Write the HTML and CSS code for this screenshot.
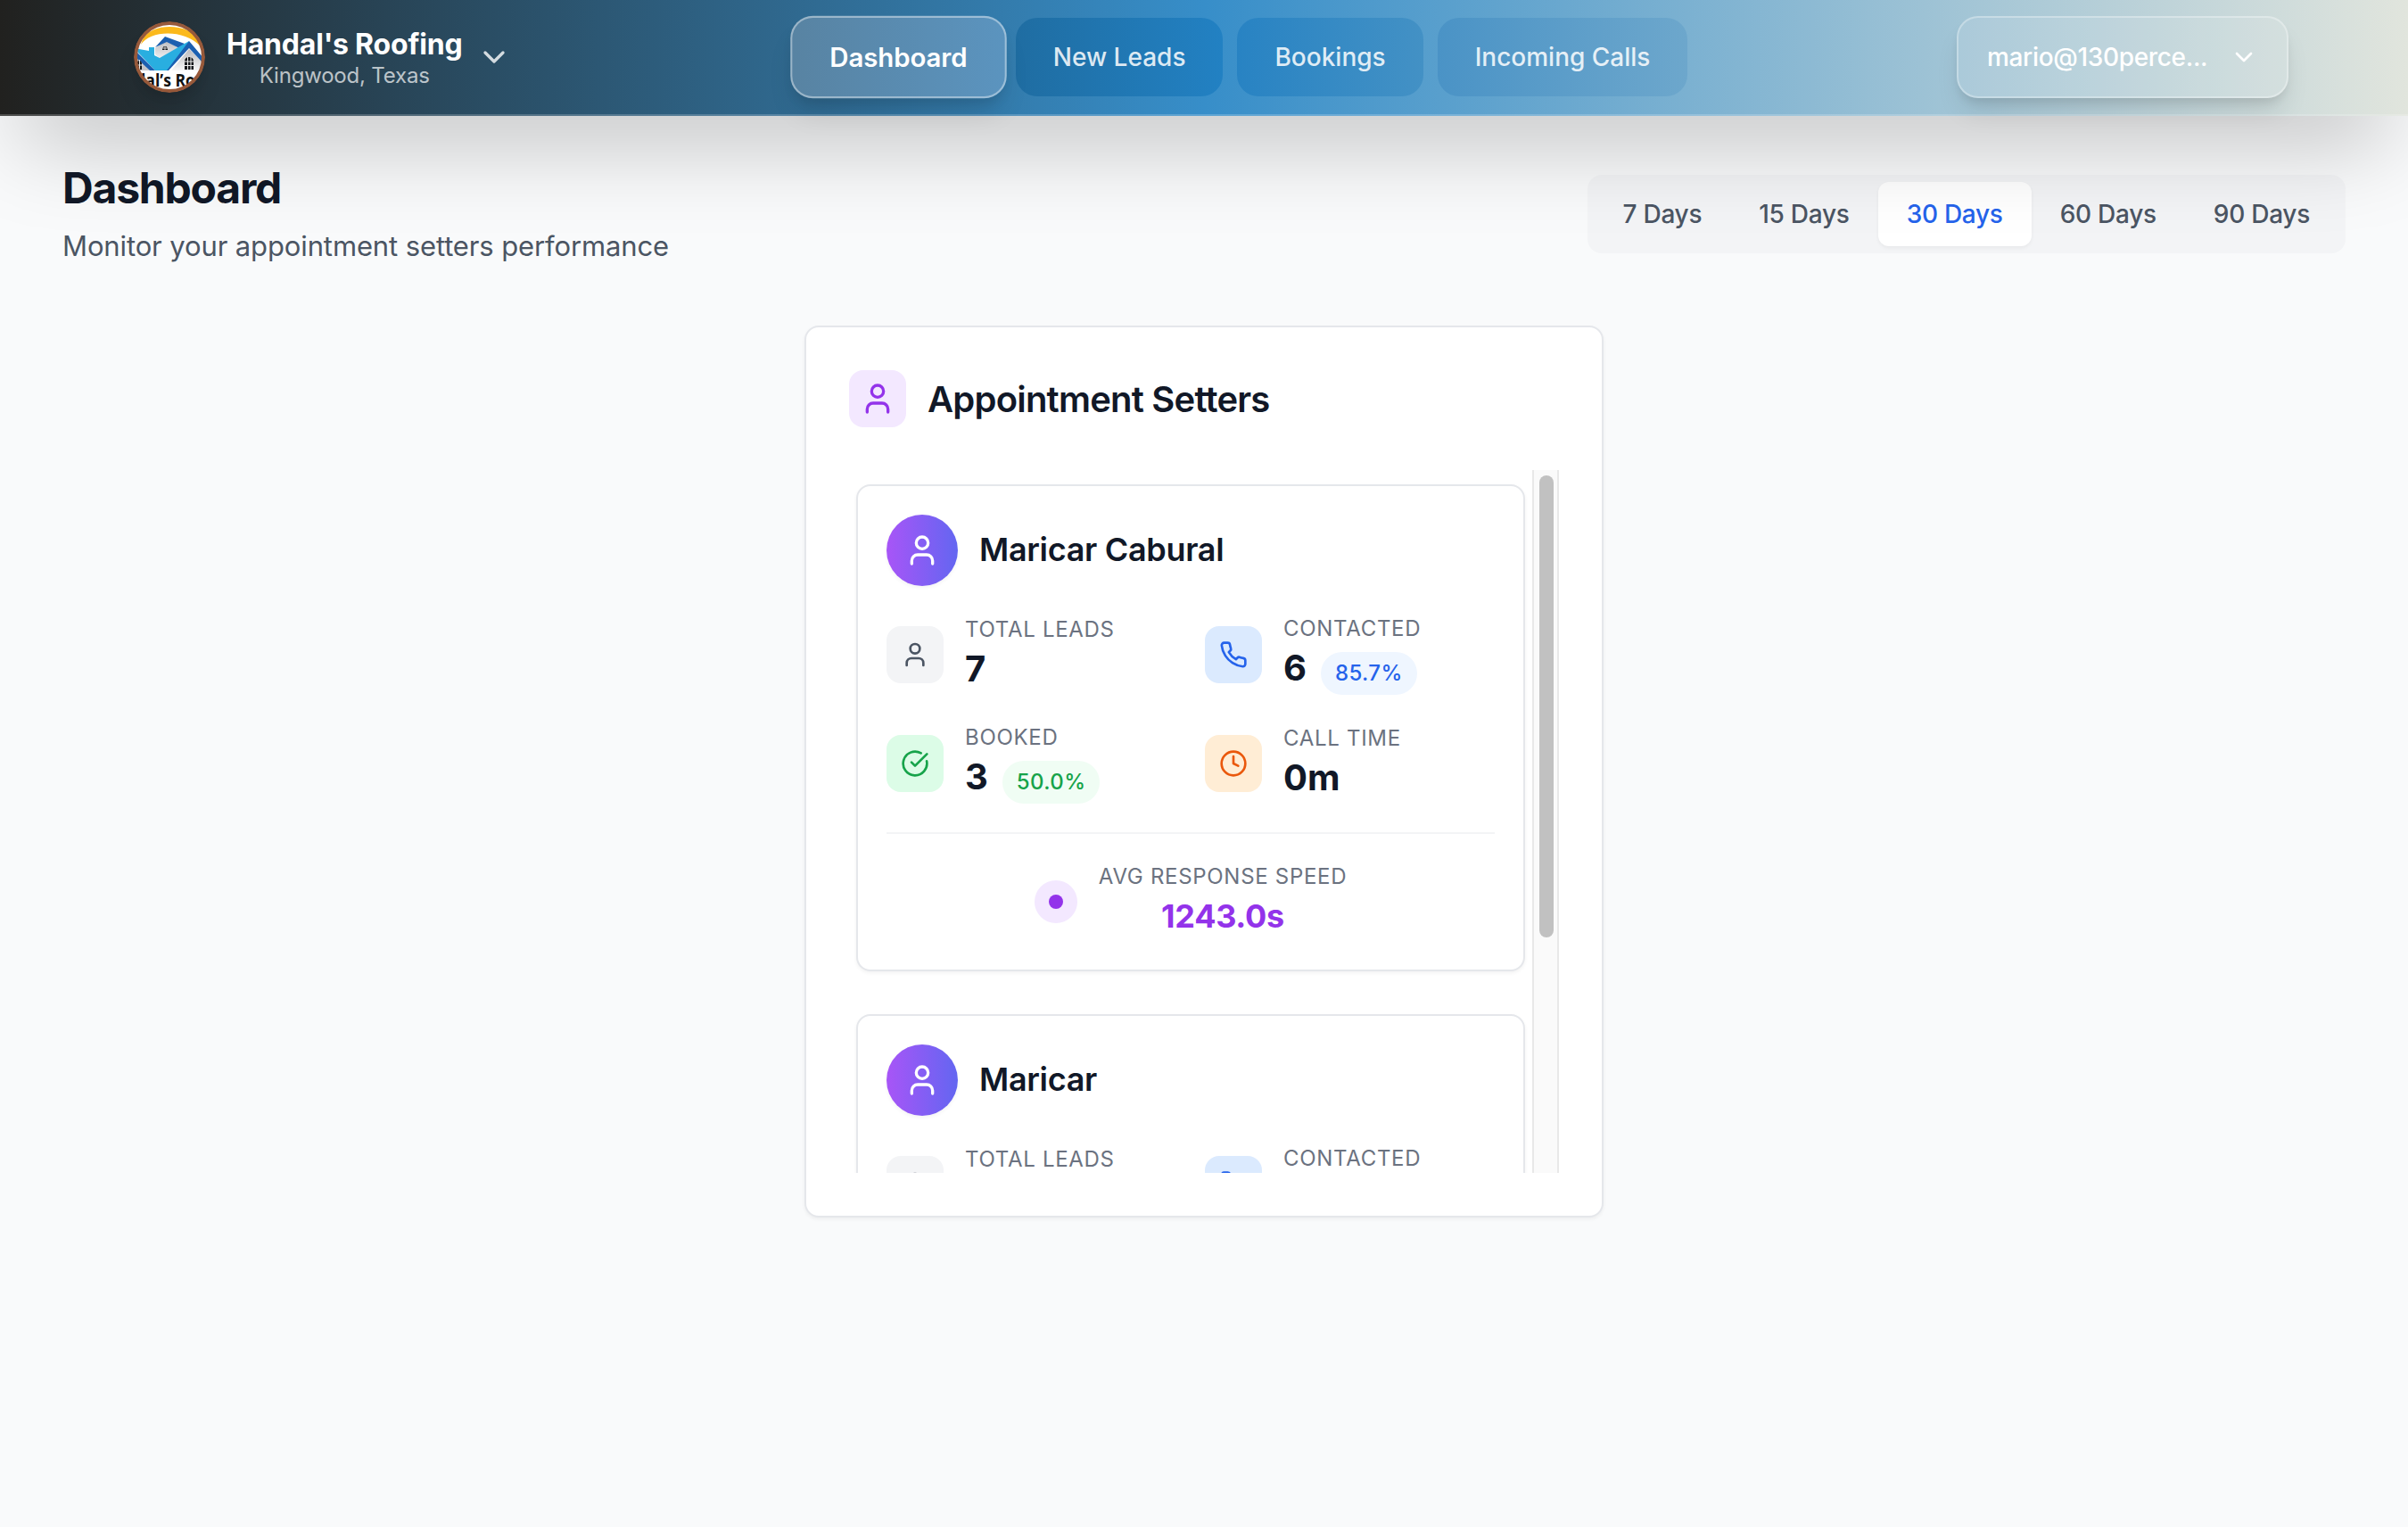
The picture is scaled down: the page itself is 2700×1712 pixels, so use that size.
FILE: index.html
```html
<!DOCTYPE html>
<html lang="en">
<head>
<meta charset="utf-8">
<title>Dashboard</title>
<link rel="stylesheet" href="styles.css">
</head>
<body>
<svg class="sprite" aria-hidden="true">
  <symbol id="user" viewBox="0 0 24 24"><path d="M19 21v-2a4 4 0 0 0-4-4H9a4 4 0 0 0-4 4v2"/><circle cx="12" cy="7" r="4"/></symbol>
  <symbol id="chevron" viewBox="0 0 24 24"><path d="m6 9 6 6 6-6"/></symbol>
  <symbol id="phone" viewBox="0 0 24 24"><path d="M22 16.92v3a2 2 0 0 1-2.18 2 19.79 19.79 0 0 1-8.63-3.07 19.5 19.5 0 0 1-6-6 19.79 19.79 0 0 1-3.07-8.67A2 2 0 0 1 4.11 2h3a2 2 0 0 1 2 1.72 12.84 12.84 0 0 0 .7 2.81 2 2 0 0 1-.45 2.11L8.09 9.91a16 16 0 0 0 6 6l1.27-1.27a2 2 0 0 1 2.11-.45 12.84 12.84 0 0 0 2.81.7A2 2 0 0 1 22 16.92z"/></symbol>
  <symbol id="check" viewBox="0 0 24 24"><path d="M21.801 10A10 10 0 1 1 17 3.335"/><path d="m9 11 3 3L22 4"/></symbol>
  <symbol id="clock" viewBox="0 0 24 24"><circle cx="12" cy="12" r="10"/><path d="M12 6v6l4 2"/></symbol>
</svg>

<header class="topbar">
  <div class="brand">
    <svg class="logo" viewBox="0 0 80 80" role="img" aria-label="Handal's Roofing logo">
      <defs>
        <clipPath id="disc"><circle cx="40" cy="40" r="37"/></clipPath>
        <linearGradient id="wall" x1="0" y1="0" x2="0" y2="1"><stop offset="0" stop-color="#b9b9bd"/><stop offset="1" stop-color="#f6f6f7"/></linearGradient>
      </defs>
      <circle cx="40" cy="40" r="38" fill="#fff"/>
      <g clip-path="url(#disc)">
        <path d="M8 26C18 10 56 8 75 28L74 22C64 2 20 0 10 20Z" fill="#fbb91c"/>
        <path d="M24 30 36 21 50 30 32 44 24 37Z" fill="url(#wall)"/>
        <path d="M24 29 35 17 57 25 51 30 37 23Z" fill="#1c5fb0"/>
        <path d="M42 55 62 31 78 46V55Z" fill="url(#wall)"/>
        <path d="M0 34 18 55H0Z" fill="#c5c5c9"/>
        <path d="M26 55 62 22 78 41V47L62 30 39 55Z" fill="#1b5fb1"/>
        <path d="M0 30 17 33V29H23V38L29 41 62 22 37 55H24L4 34Z" fill="#29aee0"/>
        <path d="M3 34 24 55H18L2 40Z" fill="#1b5fb1"/>
        <path d="M57 54V45Q57 40 62 40T67 45V54Z" fill="#16181c"/>
        <path d="M57 45H67M57 49.5H67M60.5 40V54M64 40V54" stroke="#eee" stroke-width="1"/>
        <path d="M32 32V30Q35 25 38 30V32Z" fill="#16181c"/>
        <path d="M35 26V33M32 30H38" stroke="#eee" stroke-width=".8"/>
        <path d="M4 45Q8 42 9 47V54H4Z" fill="#16181c"/>
        <path d="M3 49H10M6.5 43V54" stroke="#eee" stroke-width="1"/>
        <rect y="55" width="80" height="25" fill="#fff"/>
        <text x="8" y="73" class="logo-text" textLength="61" lengthAdjust="spacingAndGlyphs">lal’s Ro</text>
      </g>
      <circle cx="40" cy="40" r="38" fill="none" stroke="#97593a" stroke-width="4"/>
    </svg>
    <div class="brand-names">
      <div class="brand-title">Handal's Roofing</div>
      <div class="brand-place">Kingwood, Texas</div>
    </div>
    <svg class="icon brand-chevron"><use href="#chevron"/></svg>
  </div>
  <nav class="nav">
    <a class="nav-item active"><span>Dashboard</span></a>
    <a class="nav-item leads"><span>New Leads</span></a>
    <a class="nav-item bookings"><span>Bookings</span></a>
    <a class="nav-item calls"><span>Incoming Calls</span></a>
  </nav>
  <button class="account"><span>mario@130perce...</span><svg class="icon"><use href="#chevron"/></svg></button>
</header>

<main class="page">
  <div class="page-head">
    <div>
      <h1><span>Dashboard</span></h1>
      <p><span>Monitor your appointment setters performance</span></p>
    </div>
    <div class="ranges">
      <button>7 Days</button><button>15 Days</button><button class="selected">30 Days</button><button>60 Days</button><button>90 Days</button>
    </div>
  </div>

  <section class="panel">
    <div class="panel-head">
      <span class="tile purple"><svg class="icon"><use href="#user"/></svg></span>
      <h2><span>Appointment Setters</span></h2>
    </div>
    <div class="scroller">
      <div class="setters">
        <article class="setter">
          <div class="setter-head"><span class="avatar"><svg class="icon"><use href="#user"/></svg></span><h3>Maricar Cabural</h3></div>
          <div class="stats">
            <div class="stat"><span class="tile gray"><svg class="icon"><use href="#user"/></svg></span><div><div class="label">TOTAL LEADS</div><div class="value">7</div></div></div>
            <div class="stat"><span class="tile blue"><svg class="icon"><use href="#phone"/></svg></span><div><div class="label">CONTACTED</div><div class="value-row"><span class="value">6</span><span class="badge badge-blue">85.7%</span></div></div></div>
            <div class="stat"><span class="tile green"><svg class="icon"><use href="#check"/></svg></span><div><div class="label">BOOKED</div><div class="value-row"><span class="value">3</span><span class="badge badge-green">50.0%</span></div></div></div>
            <div class="stat"><span class="tile orange"><svg class="icon"><use href="#clock"/></svg></span><div><div class="label">CALL TIME</div><div class="value">0m</div></div></div>
          </div>
          <div class="speed"><span class="pulse"></span><div><div class="label">AVG RESPONSE SPEED</div><div class="speed-value">1243.0s</div></div></div>
        </article>
        <article class="setter">
          <div class="setter-head"><span class="avatar"><svg class="icon"><use href="#user"/></svg></span><h3>Maricar</h3></div>
          <div class="stats">
            <div class="stat"><span class="tile gray"><svg class="icon"><use href="#user"/></svg></span><div><div class="label">TOTAL LEADS</div><div class="value">&nbsp;</div></div></div>
            <div class="stat"><span class="tile blue"><svg class="icon"><use href="#phone"/></svg></span><div class="tall"><div class="label">CONTACTED</div></div></div>
          </div>
        </article>
      </div>
      <div class="track"><div class="thumb"></div></div>
    </div>
  </section>
</main>
</body>
</html>
```
FILE: styles.css
```css
* { box-sizing: border-box; }
body { margin: 0; min-height: 1712px; background: #f9fafb; color: #111827; font-family: Inter, "Liberation Sans", sans-serif; overflow: hidden; }
h1, h2, h3, p { margin: 0; }
button { border: 0; background: none; font: inherit; color: inherit; }
.sprite { display: none; }
.icon { width: 32px; height: 32px; flex: none; fill: none; stroke: currentColor; stroke-width: 2; stroke-linecap: round; stroke-linejoin: round; }

.topbar { position: relative; z-index: 2; display: grid; grid-template-columns: 742px 1fr 372px; align-items: center; height: 130px; padding: 0 134px 0 150px; border-bottom: 2px solid rgba(255,255,255,.2); background: linear-gradient(90deg, #21211f 0%, #378ec9 50%, #e1e5dd 100%) border-box; box-shadow: 0 50px 100px -24px rgba(0,0,0,.25); }
.brand { display: flex; align-items: center; color: #fff; }
.logo { width: 80px; height: 80px; margin-right: 24px; border-radius: 50%; box-shadow: 0 20px 30px -6px rgba(0,0,0,.1), 0 8px 12px -4px rgba(0,0,0,.1); }
.logo-text { font: 700 19px "Open Sans", sans-serif; fill: #111; }
.brand-names { padding-top: 3px; text-align: center; }
.brand-title { font-size: 32px; font-weight: 700; line-height: 39px; letter-spacing: -.2px; white-space: nowrap; }
.brand-place { font-size: 24px; line-height: 32px; letter-spacing: -.2px; color: rgba(255,255,255,.7); }
.brand-chevron { width: 40px; height: 40px; margin-left: 16px; color: rgba(255,255,255,.8); }
.nav { display: flex; gap: 16px; }
.nav-item { display: flex; align-items: center; height: 88px; padding: 0 42px; border-radius: 24px; font-size: 28px; font-weight: 500; color: rgba(255,255,255,.85); white-space: nowrap; }
.active { transform: scale(1.05); color: #fff; font-weight: 600; letter-spacing: -.1px; border: 2px solid rgba(255,255,255,.4); padding: 0 40px; background: linear-gradient(90deg, #5883a2, #5b94bf) border-box; box-shadow: 0 20px 30px -6px rgba(0,0,0,.1), 0 8px 12px -4px rgba(0,0,0,.1); }
.leads { background: linear-gradient(90deg, #1f6da2, #2281c3); }
.bookings { background: linear-gradient(90deg, #2883c3, #4391c5); }
.calls { background: linear-gradient(90deg, #4a93c6, #6da7cc); }
.account { display: flex; align-items: center; justify-content: space-between; height: 92px; padding: 0 32px; border: 2px solid rgba(255,255,255,.3); border-radius: 24px; background: rgba(255,255,255,.1); color: #fff; font-size: 28px; font-weight: 500; letter-spacing: -.33px; box-shadow: 0 20px 30px -6px rgba(0,0,0,.1), 0 8px 12px -4px rgba(0,0,0,.1); }

.page { padding: 50px 70px 0; }
.page-head { display: flex; align-items: center; justify-content: space-between; height: 120px; }
h1 { margin-top: -2px; font-size: 48px; line-height: 64px; font-weight: 700; letter-spacing: -.025em; }
.page-head p { margin-top: 9px; font-size: 31px; line-height: 48px; letter-spacing: -.12px; color: #4b5563; }
.ranges { display: flex; padding: 8px; border-radius: 16px; background: #f3f4f6; }
.ranges button { height: 72px; padding: 0 32px; border-radius: 12px; font-size: 28px; font-weight: 500; letter-spacing: -.27px; color: #4b5563; }
.ranges .selected { background: #fff; color: #2563eb; box-shadow: 0 2px 4px rgba(0,0,0,.05); }

.panel { width: 896px; height: 1000px; margin: 65px auto 0; padding: 48px; border: 2px solid #e5e7eb; border-radius: 16px; background: #fff; box-shadow: 0 2px 4px rgba(0,0,0,.05); }
.panel-head { display: flex; align-items: center; gap: 24px; height: 64px; margin-bottom: 48px; }
h2 { font-size: 40px; font-weight: 600; letter-spacing: -.79px; }
.tile { display: grid; place-items: center; flex: none; width: 64px; height: 64px; border-radius: 16px; }
.purple { background: #f3e8ff; color: #9333ea; }
.purple .icon, .avatar .icon { width: 40px; height: 40px; }
.gray { background: #f3f4f6; color: #4b5563; }
.blue { background: #dbeafe; color: #2563eb; }
.green { background: #dcfce7; color: #16a34a; }
.orange { background: #ffedd5; color: #ea580c; }

.scroller { display: flex; height: 788px; overflow: hidden; }
.setters { flex: 1; display: flex; flex-direction: column; gap: 48px; padding: 16px 8px; }
.setter { flex: none; height: 546px; padding: 32px; border: 2px solid #e5e7eb; border-radius: 16px; background: #fff; box-shadow: 0 2px 4px rgba(0,0,0,.05); }
.setter-head { display: flex; align-items: center; gap: 24px; margin-bottom: 32px; }
.avatar { display: grid; place-items: center; width: 80px; height: 80px; border-radius: 50%; background: linear-gradient(90deg, #a855f7, #6366f1); color: #fff; box-shadow: 0 2px 4px rgba(0,0,0,.05); }
h3 { padding-bottom: 2px; font-size: 36px; line-height: 56px; font-weight: 600; letter-spacing: -.32px; }
.stats { display: grid; grid-template-columns: 1fr 1fr; grid-auto-rows: 90px; gap: 32px; }
.stat { display: flex; align-items: center; gap: 24px; }
.label { font-size: 24px; line-height: 32px; color: #6b7280; letter-spacing: .7px; white-space: nowrap; }
.value { font-size: 40px; line-height: 56px; font-weight: 700; }
.value-row { display: flex; align-items: baseline; gap: 16px; height: 58px; }
.badge { padding: 8px 16px; border-radius: 24px; font-size: 24px; line-height: 32px; font-weight: 500; letter-spacing: .4px; }
.badge-blue { background: #eff6ff; color: #2563eb; }
.badge-green { background: #f0fdf4; color: #16a34a; }
.tall { height: 90px; }
.speed { display: flex; align-items: center; justify-content: center; gap: 24px; margin-top: 32px; padding-top: 32px; border-top: 2px solid #f3f4f6; text-align: center; }
.pulse { display: grid; place-items: center; width: 48px; height: 48px; border-radius: 50%; background: #f3e8ff; }
.pulse::before { content: ""; width: 16px; height: 16px; border-radius: 50%; background: #9333ea; }
.speed-value { font-size: 36px; line-height: 56px; font-weight: 700; letter-spacing: -.3px; color: #9333ea; }
.track { width: 30px; padding: 6px; border: solid #e8e8e8; border-width: 0 2px; background: #fafafa; }
.thumb { width: 16px; height: 518px; border-radius: 8px; background: #c1c1c1; }
```
